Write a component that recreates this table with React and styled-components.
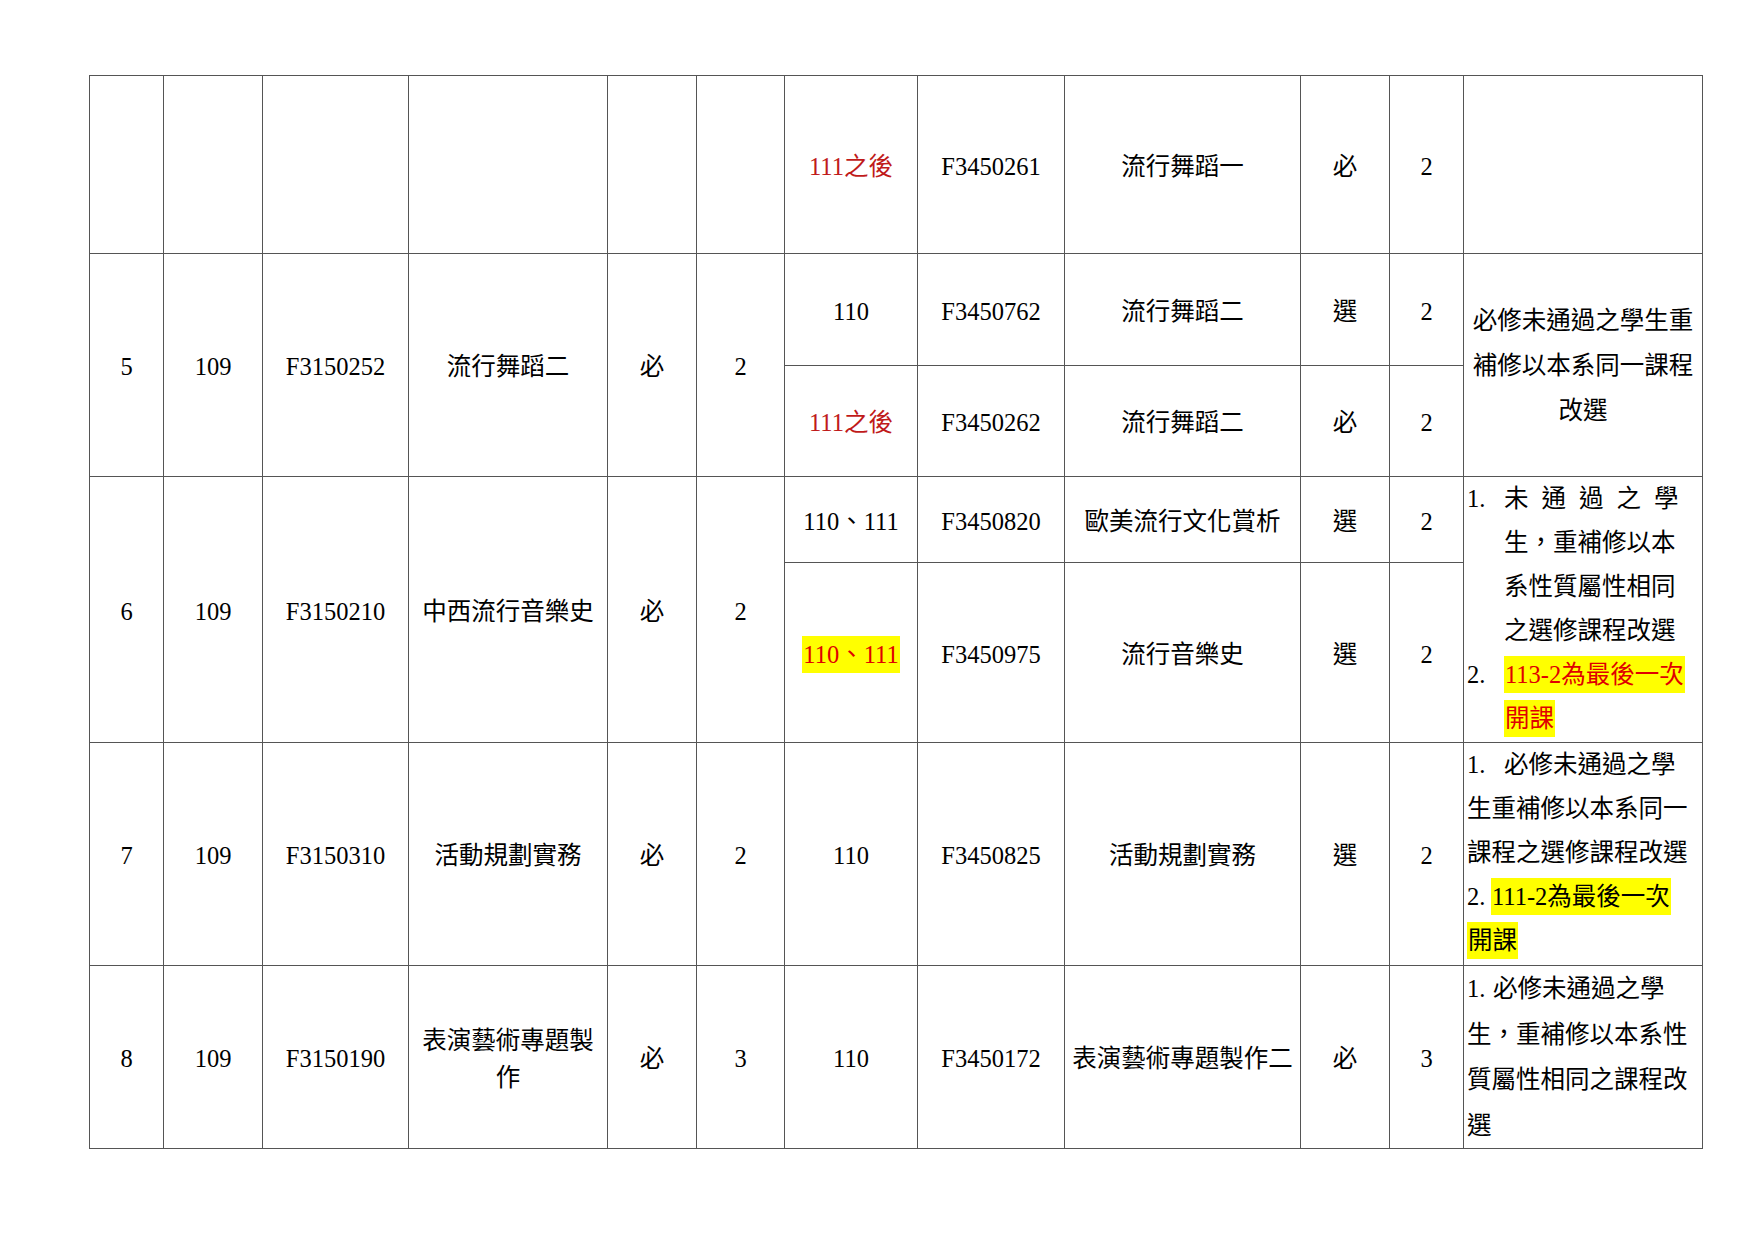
import React from "react";
import styled, { createGlobalStyle } from "styled-components";

const Global = createGlobalStyle`
  html, body {
    margin: 0;
    padding: 0;
    background: #fff;
  }
`;

const Sheet = styled.div`
  padding: 75px 0 0 89px;
  width: 1755px;
  height: 1241px;
  box-sizing: border-box;
`;

const Table = styled.table`
  border-collapse: collapse;
  table-layout: fixed;
  width: 1613px;
  font-family: "Liberation Serif", "Noto Sans CJK TC", serif;
  font-size: 24.5px;
  color: #000;
`;

const Row = styled.tr`
  height: ${(p) => p.$h}px;
`;

const Cell = styled.td`
  border: 1px solid #555;
  padding: 4px 4px 0 4px;
  text-align: center;
  vertical-align: middle;
  line-height: 36px;
  white-space: nowrap;
  overflow: hidden;
  color: ${(p) => (p.$red ? "#c01a1a" : "#000")};
`;

const Stack = styled.div`
  line-height: ${(p) => p.$lh || 37}px;
  white-space: normal;
`;

const NoteCell = styled.td`
  border: 1px solid #555;
  padding: 0 3px 0 3px;
  text-align: ${(p) => (p.$center ? "center" : "left")};
  vertical-align: ${(p) => (p.$top ? "top" : "middle")};
  line-height: ${(p) => p.$lh || 44}px;
  white-space: nowrap;
  overflow: hidden;
`;

const NoteLine = styled.div`
  height: ${(p) => p.$lh || 44}px;
  padding-left: ${(p) => (p.$indent ? 37 : 0)}px;
`;

const Num = styled.span`
  display: inline-block;
  width: ${(p) => p.$w}px;
`;

const Spread = styled.span`
  letter-spacing: 13px;
`;

const Mark = styled.span`
  background: #ffff00;
  padding: 5px 1px;
  color: ${(p) => (p.$red ? "#e00000" : "#000")};
`;

const widths = [74, 99, 146, 199, 89, 88, 133, 147, 236, 89, 74, 239];

function Offer({ year, red, code, name, type, credit }) {
  return (
    <>
      <Cell $red={red}>{year}</Cell>
      <Cell>{code}</Cell>
      <Cell>{name}</Cell>
      <Cell>{type}</Cell>
      <Cell>{credit}</Cell>
    </>
  );
}

export default function App() {
  return (
    <Sheet>
      <Global />
      <Table>
        <colgroup>
          {widths.map((w, i) => (
            <col key={i} style={{ width: w }} />
          ))}
        </colgroup>
        <tbody>
          <Row $h={178}>
            <Cell />
            <Cell />
            <Cell />
            <Cell />
            <Cell />
            <Cell />
            <Offer year="111之後" red code="F3450261" name="流行舞蹈一" type="必" credit="2" />
            <NoteCell />
          </Row>

          <Row $h={112}>
            <Cell rowSpan={2}>5</Cell>
            <Cell rowSpan={2}>109</Cell>
            <Cell rowSpan={2}>F3150252</Cell>
            <Cell rowSpan={2}>流行舞蹈二</Cell>
            <Cell rowSpan={2}>必</Cell>
            <Cell rowSpan={2}>2</Cell>
            <Offer year="110" code="F3450762" name="流行舞蹈二" type="選" credit="2" />
            <NoteCell rowSpan={2} $center $lh={45}>
              <NoteLine $lh={45}>必修未通過之學生重</NoteLine>
              <NoteLine $lh={45}>補修以本系同一課程</NoteLine>
              <NoteLine $lh={45}>改選</NoteLine>
            </NoteCell>
          </Row>
          <Row $h={111}>
            <Offer year="111之後" red code="F3450262" name="流行舞蹈二" type="必" credit="2" />
          </Row>

          <Row $h={86}>
            <Cell rowSpan={2}>6</Cell>
            <Cell rowSpan={2}>109</Cell>
            <Cell rowSpan={2}>F3150210</Cell>
            <Cell rowSpan={2}>中西流行音樂史</Cell>
            <Cell rowSpan={2}>必</Cell>
            <Cell rowSpan={2}>2</Cell>
            <Offer year="110、111" code="F3450820" name="歐美流行文化賞析" type="選" credit="2" />
            <NoteCell rowSpan={2} $top $lh={44}>
              <NoteLine>
                <Num $w={37}>1.</Num>
                <Spread>未通過之學</Spread>
              </NoteLine>
              <NoteLine $indent>生，重補修以本</NoteLine>
              <NoteLine $indent>系性質屬性相同</NoteLine>
              <NoteLine $indent>之選修課程改選</NoteLine>
              <NoteLine>
                <Num $w={37}>2.</Num>
                <Mark $red>113-2為最後一次</Mark>
              </NoteLine>
              <NoteLine $indent>
                <Mark $red>開課</Mark>
              </NoteLine>
            </NoteCell>
          </Row>
          <Row $h={180}>
            <Cell>
              <Mark $red>110、111</Mark>
            </Cell>
            <Cell>F3450975</Cell>
            <Cell>流行音樂史</Cell>
            <Cell>選</Cell>
            <Cell>2</Cell>
          </Row>

          <Row $h={223}>
            <Cell>7</Cell>
            <Cell>109</Cell>
            <Cell>F3150310</Cell>
            <Cell>活動規劃實務</Cell>
            <Cell>必</Cell>
            <Cell>2</Cell>
            <Offer year="110" code="F3450825" name="活動規劃實務" type="選" credit="2" />
            <NoteCell $top $lh={44}>
              <NoteLine>
                <Num $w={37}>1.</Num>
                必修未通過之學
              </NoteLine>
              <NoteLine>生重補修以本系同一</NoteLine>
              <NoteLine>課程之選修課程改選</NoteLine>
              <NoteLine>
                <Num $w={24}>2.</Num>
                <Mark>111-2為最後一次</Mark>
              </NoteLine>
              <NoteLine>
                <Mark>開課</Mark>
              </NoteLine>
            </NoteCell>
          </Row>

          <Row $h={183}>
            <Cell>8</Cell>
            <Cell>109</Cell>
            <Cell>F3150190</Cell>
            <Cell>
              <Stack $lh={37}>
                表演藝術專題製
                <br />作
              </Stack>
            </Cell>
            <Cell>必</Cell>
            <Cell>3</Cell>
            <Offer year="110" code="F3450172" name="表演藝術專題製作二" type="必" credit="3" />
            <NoteCell $top $lh={45.5}>
              <NoteLine $lh={45.5}>
                <Num $w={26}>1.</Num>
                必修未通過之學
              </NoteLine>
              <NoteLine $lh={45.5}>生，重補修以本系性</NoteLine>
              <NoteLine $lh={45.5}>質屬性相同之課程改</NoteLine>
              <NoteLine $lh={45.5}>選</NoteLine>
            </NoteCell>
          </Row>
        </tbody>
      </Table>
    </Sheet>
  );
}
